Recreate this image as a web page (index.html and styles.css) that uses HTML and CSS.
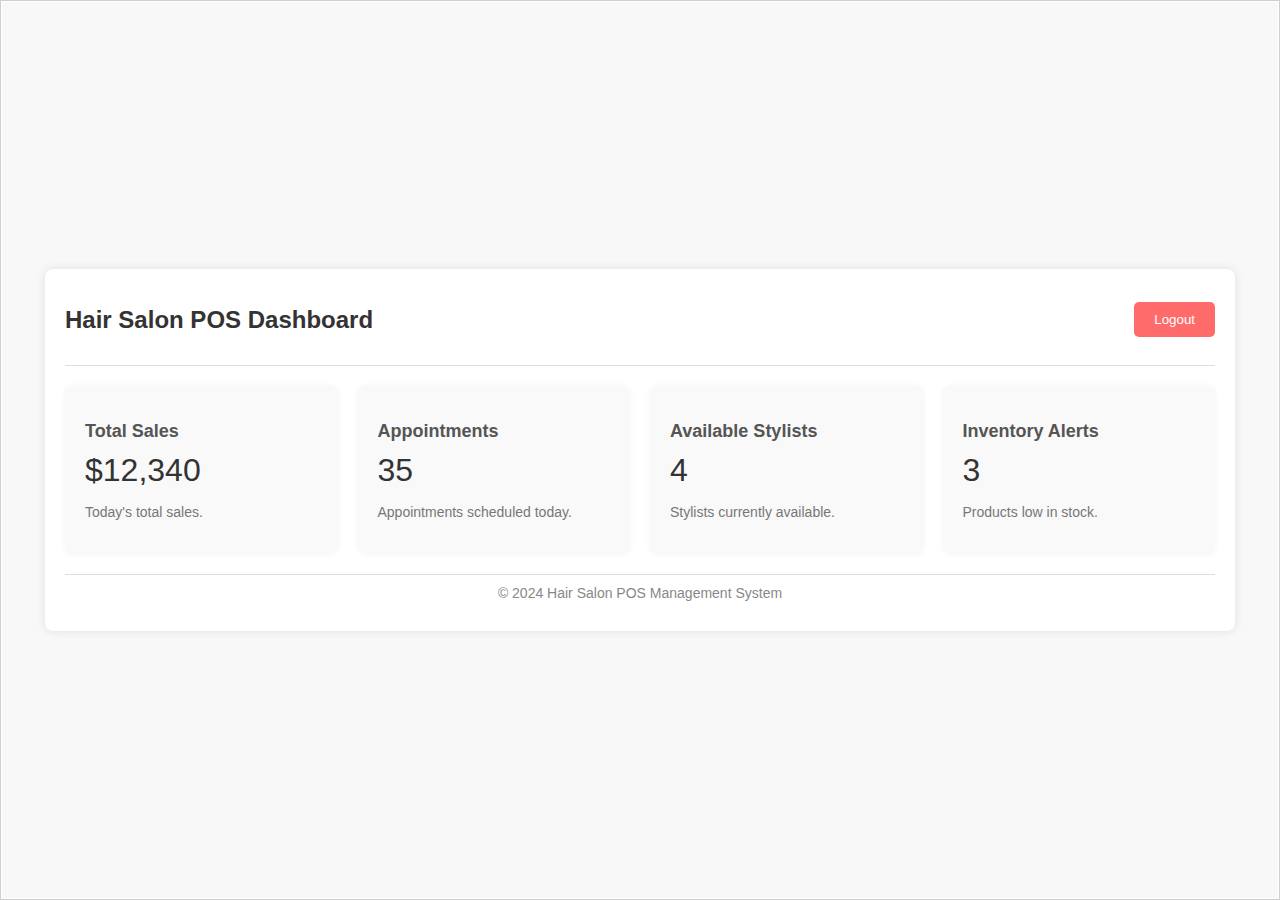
FILE: index.html
```html
<!DOCTYPE html>
<html lang="en">
<head>
<meta charset="utf-8">
<title>Hair Salon POS Dashboard</title>
<link rel="stylesheet" href="styles.css">
</head>
<body>
<div class="dashboard">
  <header class="dash-header">
    <h1 class="dash-title">Hair Salon POS Dashboard</h1>
    <button class="logout-btn">Logout</button>
  </header>
  <section class="stats">
    <div class="stat-card">
      <h3 class="stat-title">Total Sales</h3>
      <p class="stat-value">$12,340</p>
      <p class="stat-desc">Today's total sales.</p>
    </div>
    <div class="stat-card">
      <h3 class="stat-title">Appointments</h3>
      <p class="stat-value">35</p>
      <p class="stat-desc">Appointments scheduled today.</p>
    </div>
    <div class="stat-card">
      <h3 class="stat-title">Available Stylists</h3>
      <p class="stat-value">4</p>
      <p class="stat-desc">Stylists currently available.</p>
    </div>
    <div class="stat-card">
      <h3 class="stat-title">Inventory Alerts</h3>
      <p class="stat-value">3</p>
      <p class="stat-desc">Products low in stock.</p>
    </div>
  </section>
  <footer class="dash-footer">© 2024 Hair Salon POS Management System</footer>
</div>
</body>
</html>
```
FILE: styles.css
```css
* { box-sizing: border-box; }
html, body { margin: 0; padding: 0; }
body {
  height: 900px;
  background: #f8f8f8;
  border: 1px solid #cfcfcf;
  box-shadow: inset 0 0 0 1px #ffffff;
  font-family: "Liberation Sans", Arial, sans-serif;
  display: flex;
  align-items: center;
  justify-content: center;
}
.dashboard {
  width: 1190px;
  background: #ffffff;
  border-radius: 8px;
  box-shadow: 0 0 10px rgba(0, 0, 0, 0.1);
  padding: 20px 20px 20px;
}
.dash-header {
  display: flex;
  justify-content: space-between;
  align-items: center;
  padding-bottom: 16px;
  border-bottom: 1px solid #dddddd;
}
.dash-title {
  margin: 17px 0 15px;
  font-size: 24px;
  font-weight: bold;
  color: #333333;
}
.logout-btn {
  font-family: "Liberation Sans", Arial, sans-serif;
  background: #ff6b6b;
  color: #ffffff;
  border: none;
  border-radius: 5px;
  padding: 10px 20px;
  font-size: 13.333px;
  cursor: pointer;
}
.stats {
  display: grid;
  grid-template-columns: repeat(4, 1fr);
  gap: 20px;
  margin-top: 20px;
}
.stat-card {
  background: #f9f9f9;
  border-radius: 8px;
  box-shadow: 0 0 6px rgba(0, 0, 0, 0.05);
  padding: 20px;
}
.stat-title {
  margin: 15px 0 10px;
  font-size: 18px;
  font-weight: bold;
  color: #555555;
}
.stat-value {
  margin: 10px 0 15px;
  font-size: 32px;
  color: #333333;
}
.stat-desc {
  margin: 15px 0 14px;
  font-size: 14px;
  color: #777777;
}
.dash-footer {
  margin-top: 20px;
  border-top: 1px solid #dddddd;
  padding: 10px 0;
  text-align: center;
  font-size: 14px;
  color: #888888;
}
```
